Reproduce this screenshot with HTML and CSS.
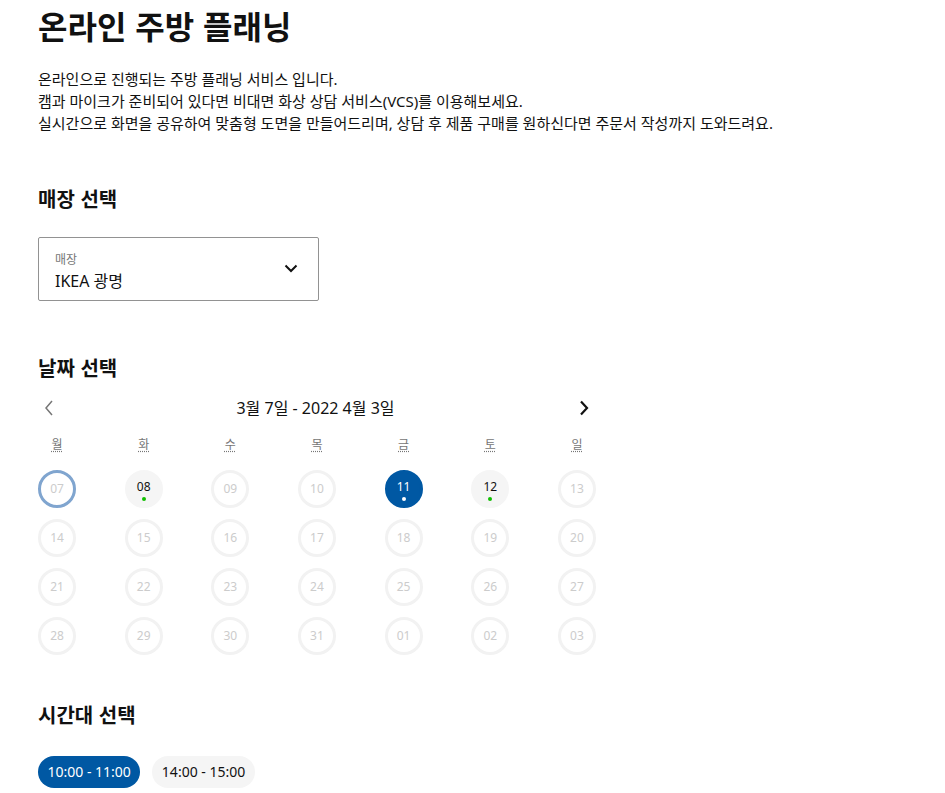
FILE: index.html
```html
<!DOCTYPE html>
<html lang="ko">
<head>
<meta charset="utf-8">
<title>온라인 주방 플래닝</title>
<link rel="stylesheet" href="styles.css">
</head>
<body>
<main class="page">
  <h1 class="title">온라인 주방 플래닝</h1>
  <p class="desc">온라인으로 진행되는 주방 플래닝 서비스 입니다.<br>캠과 마이크가 준비되어 있다면 비대면 화상 상담 서비스(VCS)를 이용해보세요.<br>실시간으로 화면을 공유하여 맞춤형 도면을 만들어드리며, 상담 후 제품 구매를 원하신다면 주문서 작성까지 도와드려요.</p>

  <h2 class="section-title store-title">매장 선택</h2>
  <div class="select">
    <div class="select-text">
      <span class="select-label">매장</span>
      <span class="select-value">IKEA 광명</span>
    </div>
    <svg class="select-chevron" width="16" height="16" viewBox="0 0 16 16"><path d="M2.5 5.5 L8 11 L13.5 5.5" fill="none" stroke="#111" stroke-width="2"/></svg>
  </div>

  <h2 class="section-title date-title">날짜 선택</h2>
  <div class="calendar">
    <div class="cal-head">
      <button class="cal-nav prev" aria-label="이전"><svg width="12" height="16" viewBox="0 0 12 16"><path d="M9 1 L3 8 L9 15" fill="none" stroke="#767676" stroke-width="1.5"/></svg></button>
      <span class="cal-range">3월 7일 - 2022 4월 3일</span>
      <button class="cal-nav next" aria-label="다음"><svg width="12" height="16" viewBox="0 0 12 16"><path d="M3 1.5 L9 8 L3 14.5" fill="none" stroke="#111" stroke-width="2.2"/></svg></button>
    </div>
    <div class="cal-grid">
      <abbr class="wd" title="월요일">월</abbr>
      <abbr class="wd" title="화요일">화</abbr>
      <abbr class="wd" title="수요일">수</abbr>
      <abbr class="wd" title="목요일">목</abbr>
      <abbr class="wd" title="금요일">금</abbr>
      <abbr class="wd" title="토요일">토</abbr>
      <abbr class="wd" title="일요일">일</abbr>

      <span class="day today">07</span>
      <span class="day avail">08<i class="dot"></i></span>
      <span class="day">09</span>
      <span class="day">10</span>
      <span class="day selected">11<i class="dot"></i></span>
      <span class="day avail">12<i class="dot"></i></span>
      <span class="day">13</span>

      <span class="day">14</span>
      <span class="day">15</span>
      <span class="day">16</span>
      <span class="day">17</span>
      <span class="day">18</span>
      <span class="day">19</span>
      <span class="day">20</span>

      <span class="day">21</span>
      <span class="day">22</span>
      <span class="day">23</span>
      <span class="day">24</span>
      <span class="day">25</span>
      <span class="day">26</span>
      <span class="day">27</span>

      <span class="day">28</span>
      <span class="day">29</span>
      <span class="day">30</span>
      <span class="day">31</span>
      <span class="day">01</span>
      <span class="day">02</span>
      <span class="day">03</span>
    </div>
  </div>

  <h2 class="section-title time-title">시간대 선택</h2>
  <div class="slots">
    <button class="slot active">10:00 - 11:00</button>
    <button class="slot">14:00 - 15:00</button>
  </div>
</main>
</body>
</html>
```
FILE: styles.css
```css
* { box-sizing: border-box; }
html, body { margin: 0; padding: 0; background: #fff; }
body {
  font-family: "Noto Sans", "Noto Sans CJK KR", sans-serif;
  color: #111;
}
.page {
  padding: 5px 0 0 38px;
}
.title {
  margin: 0;
  font-size: 32px;
  line-height: 40px;
  font-weight: 700;
  font-family: "Noto Sans CJK KR", sans-serif;
}
.desc {
  margin: 23px 0 0;
  font-size: 15px;
  line-height: 22px;
  color: #111;
  font-family: "Noto Sans", "Noto Sans CJK KR", sans-serif;
}
.section-title {
  margin: 0;
  font-size: 20px;
  line-height: 28px;
  font-weight: 700;
  font-family: "Noto Sans CJK KR", sans-serif;
}
.store-title { margin-top: 51px; }
.date-title { margin-top: 53px; }
.time-title { margin-top: 46px; }

.select {
  margin-top: 24px;
  width: 281px;
  height: 64px;
  border: 1px solid #929292;
  border-radius: 2px;
  display: flex;
  align-items: center;
  justify-content: space-between;
  padding: 0 19px 0 16px;
}
.select-text {
  display: flex;
  flex-direction: column;
  padding-top: 6px;
}
.select-label {
  font-size: 12px;
  line-height: 18px;
  color: #767676;
}
.select-value {
  font-size: 16px;
  line-height: 24px;
  color: #111;
}
.select-chevron { display: block; margin-top: -2px; }

.calendar { width: 558px; margin-top: 14px; }
.cal-head {
  height: 24px;
  display: flex;
  align-items: center;
  justify-content: space-between;
}
.cal-nav {
  border: 0;
  background: none;
  padding: 0;
  width: 24px;
  height: 24px;
  display: flex;
  align-items: center;
  justify-content: center;
  cursor: pointer;
}
.cal-nav.prev { margin-left: -1px; }
.cal-nav.next { margin-right: 0; }
.cal-range {
  font-size: 16px;
  line-height: 24px;
  color: #111;
  margin-left: -2px;
}
.cal-grid {
  margin-top: 16px;
  display: grid;
  grid-template-columns: repeat(7, 38px);
  justify-content: space-between;
  row-gap: 11px;
}
.wd {
  font-size: 12px;
  line-height: 18px;
  color: #767676;
  text-align: center;
  text-decoration: underline dotted #767676;
  text-underline-offset: 2px;
  margin-bottom: 5px;
}
.day {
  position: relative;
  width: 38px;
  height: 38px;
  border-radius: 50%;
  border: 3px solid #f2f2f2;
  display: flex;
  align-items: center;
  justify-content: center;
  font-size: 12px;
  line-height: 16px;
  color: #cccccc;
}
.day.today { border-color: #80a5cf; }
.day.avail {
  border-color: #f5f5f5;
  background: #f5f5f5;
  color: #111;
  padding-bottom: 4px;
}
.day.selected {
  border-color: #0058a3;
  background: #0058a3;
  color: #fff;
  padding-bottom: 4px;
}
.dot {
  position: absolute;
  left: 50%;
  top: 24px;
  width: 4px;
  height: 4px;
  margin-left: -2px;
  border-radius: 50%;
  background: #0fbf00;
}
.day.selected .dot { background: #fff; }

.slots {
  margin-top: 27px;
  display: flex;
  gap: 12px;
}
.slot {
  height: 32px;
  padding: 0 9.5px;
  border: 0;
  border-radius: 16px;
  background: #f5f5f5;
  color: #111;
  font-family: "Noto Sans", "Noto Sans CJK KR", sans-serif;
  font-size: 14px;
  line-height: 32px;
}
.slot.active {
  background: #0058a3;
  color: #fff;
}
```
